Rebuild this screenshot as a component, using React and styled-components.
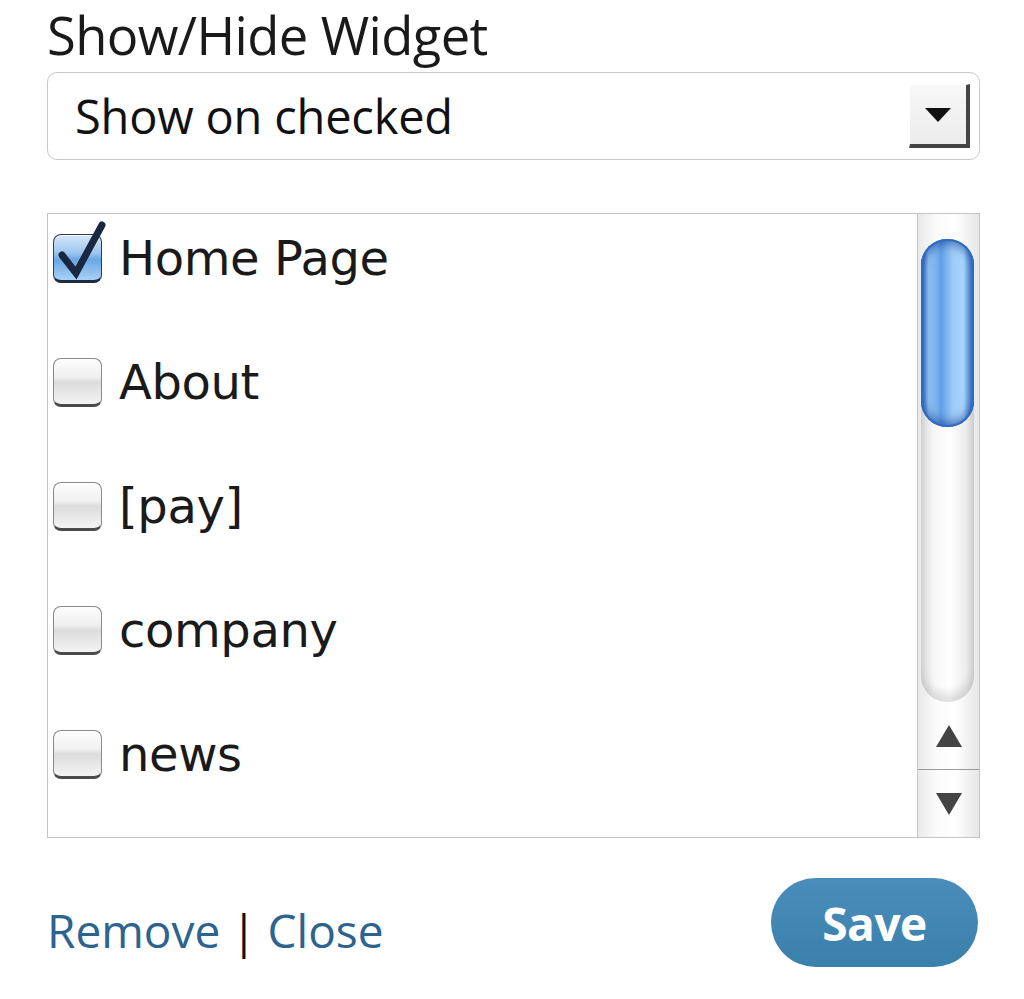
import styled, { createGlobalStyle } from "styled-components";

const GlobalStyle = createGlobalStyle`
  html, body {
    margin: 0;
    padding: 0;
    background: #fff;
  }
  body {
    font-family: "Open Sans", "DejaVu Sans", sans-serif;
    color: #222;
  }
`;

const pages = [
  { name: "Home Page", checked: true },
  { name: "About" },
  { name: "[pay]" },
  { name: "company" },
  { name: "news" },
];

const App = () => {
  return (
    <>
      <GlobalStyle />
      <Panel>
        <Title>Show/Hide Widget</Title>
        <Select>
          <SelectText>Show on checked</SelectText>
          <DropButton>
            <svg width="28" height="16" viewBox="0 0 28 16">
              <polygon points="1,1 27,1 14,15" fill="#111" />
            </svg>
          </DropButton>
        </Select>

        <ListBox>
          <Items>
            {pages.map((p) => (
              <Row key={p.name}>
                <Check checked={p.checked}>
                  {p.checked && (
                    <Tick width="56" height="62" viewBox="0 0 56 62">
                      <path
                        d="M10 34 L24 52 L50 4"
                        fill="none"
                        stroke="#1a2740"
                        strokeWidth="7"
                        strokeLinecap="round"
                        strokeLinejoin="miter"
                      />
                    </Tick>
                  )}
                </Check>
                <Label>{p.name}</Label>
              </Row>
            ))}
          </Items>
          <ScrollBar>
            <Groove>
              <Thumb />
            </Groove>
            <Arrow>
              <svg width="28" height="24" viewBox="0 0 28 24">
                <polygon points="14,1 27,23 1,23" fill="#444" />
              </svg>
            </Arrow>
            <Arrow divider>
              <svg width="28" height="24" viewBox="0 0 28 24">
                <polygon points="1,1 27,1 14,23" fill="#444" />
              </svg>
            </Arrow>
          </ScrollBar>
        </ListBox>

        <Footer>
          <Links>
            <LinkText>Remove</LinkText>
            <Sep>|</Sep>
            <LinkText>Close</LinkText>
          </Links>
          <SaveButton>Save</SaveButton>
        </Footer>
      </Panel>
    </>
  );
};

const Panel = styled.div`
  width: 933px;
  padding: 5px 0 0 47px;
  display: flex;
  flex-direction: column;
`;

const Title = styled.div`
  font-family: "Open Sans", sans-serif;
  font-size: 52.5px;
  line-height: 60px;
  letter-spacing: -0.6px;
  color: #1a1a1a;
`;

const Select = styled.div`
  margin-top: 7px;
  height: 86px;
  border: 1px solid #c9c9c9;
  border-radius: 10px;
  display: flex;
  align-items: center;
  justify-content: space-between;
  padding: 0 9px 0 27px;
  background: #fff;
`;

const SelectText = styled.span`
  font-family: "Open Sans", sans-serif;
  font-size: 47px;
  letter-spacing: -0.2px;
  color: #111;
`;

const DropButton = styled.div`
  width: 56px;
  height: 59px;
  background: linear-gradient(#f7f7f7, #ececec);
  border-right: 4px solid #444;
  border-bottom: 4px solid #444;
  border-top: 1px solid #fff;
  border-left: 1px solid #fff;
  display: flex;
  align-items: center;
  justify-content: center;
`;

const ListBox = styled.div`
  margin-top: 53px;
  height: 623px;
  border: 1px solid #c4c4c4;
  display: flex;
`;

const Items = styled.div`
  flex: 1;
  display: flex;
  flex-direction: column;
  gap: 74px;
  padding: 19px 0 0 5px;
`;

const Row = styled.label`
  height: 50px;
  display: flex;
  align-items: center;
  gap: 17px;
`;

const Check = styled.span`
  position: relative;
  width: 47px;
  height: 45px;
  border-radius: 8px;
  border: 1px solid ${(p) => (p.checked ? "#2d3b55" : "#8a8a8a")};
  border-bottom: 3px solid ${(p) => (p.checked ? "#1f2a3f" : "#4a4a4a")};
  background: ${(p) =>
    p.checked
      ? "linear-gradient(#d6e8fb 0%, #9cc6ef 40%, #6aa7e3 55%, #a9d1f6 100%)"
      : "linear-gradient(#fdfdfd 0%, #f0f0f0 40%, #dcdcdc 52%, #f4f4f4 100%)"};
  box-shadow: inset 0 1px 0 rgba(255, 255, 255, 0.8);
`;

const Tick = styled.svg`
  position: absolute;
  left: -2px;
  top: -14px;
`;

const Label = styled.span`
  font-family: "DejaVu Sans", sans-serif;
  font-size: 48px;
  letter-spacing: -0.4px;
  color: #1a1a1a;
`;

const ScrollBar = styled.div`
  width: 61px;
  border-left: 1px solid #c4c4c4;
  display: flex;
  flex-direction: column;
  background: linear-gradient(90deg, #e9e9e9, #fbfbfb 30%, #ffffff 60%, #e6e6e6);
`;

const Groove = styled.div`
  margin: 25px 5px 0 3px;
  height: 463px;
  border-radius: 26px;
  background: linear-gradient(90deg, #dcdcdc, #f7f7f7 25%, #ffffff 55%, #ececec 85%, #d8d8d8);
  box-shadow: inset 0 -8px 10px rgba(0, 0, 0, 0.12);
`;

const Thumb = styled.div`
  height: 188px;
  border-radius: 26px;
  background: linear-gradient(
    90deg,
    #2a66c0 0%,
    #8fc0f2 14%,
    #78b0ec 30%,
    #5f9fe6 38%,
    #9ccbf6 60%,
    #a8d4fa 80%,
    #2f6fc8 100%
  );
  box-shadow: inset 0 0 0 2px #2e6bc4, inset 0 6px 8px rgba(20, 60, 140, 0.5),
    inset 0 -6px 8px rgba(20, 60, 140, 0.5);
`;

const Arrow = styled.div`
  flex: 1;
  display: flex;
  align-items: center;
  justify-content: center;
  border-top: ${(p) => (p.divider ? "1px solid #9a9a9a" : "none")};
`;

const Footer = styled.div`
  margin-top: 40px;
  display: flex;
  align-items: center;
  justify-content: space-between;
`;

const Links = styled.div`
  display: flex;
  align-items: center;
  gap: 11px;
  font-family: "Open Sans", sans-serif;
  font-size: 46px;
  padding-top: 14px;
`;

const LinkText = styled.a`
  color: #2c638f;
  text-decoration: none;
`;

const Sep = styled.span`
  color: #111;
`;

const SaveButton = styled.button`
  width: 207px;
  height: 89px;
  border: none;
  border-radius: 45px;
  background: linear-gradient(#4a8dba, #3a80ad);
  color: #fff;
  font-family: "Open Sans", sans-serif;
  font-weight: 700;
  font-size: 46px;
  letter-spacing: -0.5px;
  margin-right: 2px;
  cursor: pointer;
`;

export default App;
